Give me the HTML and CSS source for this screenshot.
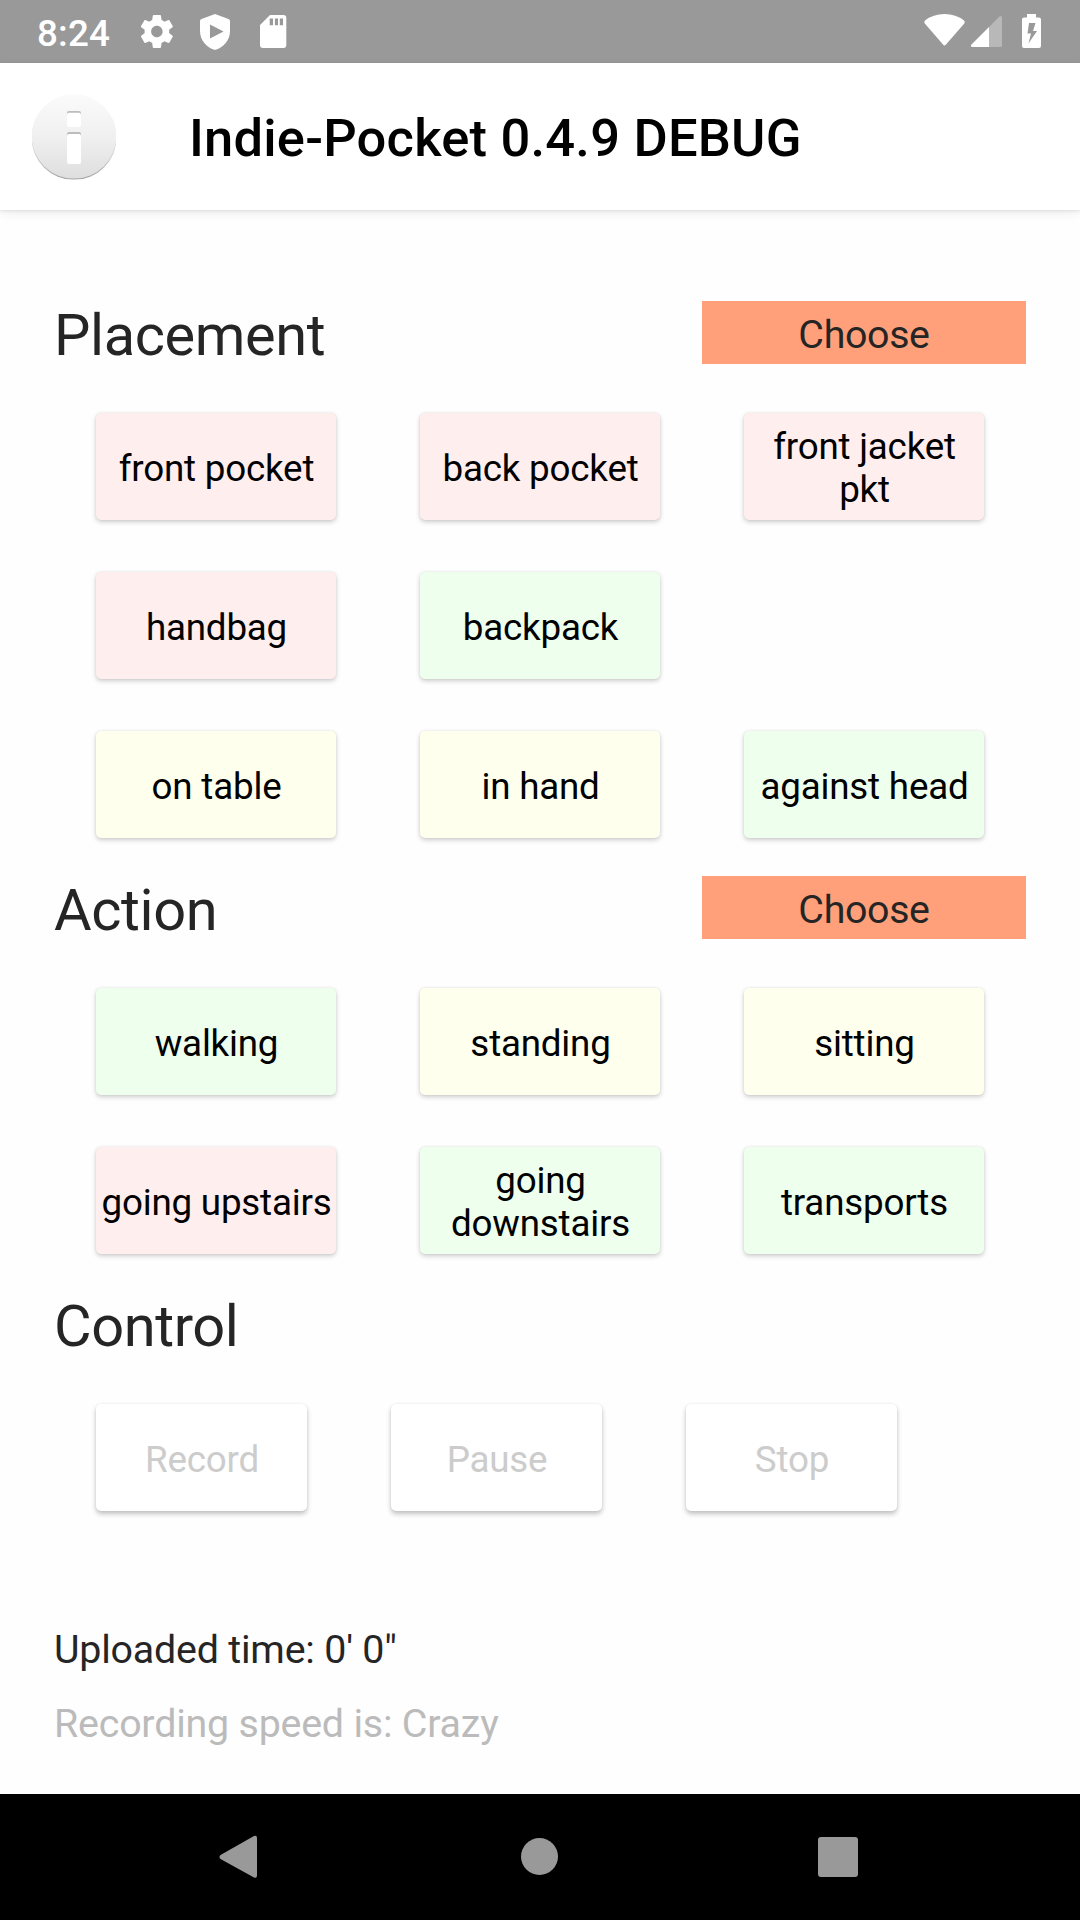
FILE: index.html
```html
<!DOCTYPE html>
<html lang="en">
<head>
<meta charset="utf-8">
<title>Indie-Pocket</title>
<link rel="stylesheet" href="styles.css">
</head>
<body>
<header class="status">
  <span class="clock">8:24</span>
  <svg class="status-left" width="260" height="63" viewBox="120 0 260 63">
    <path fill="#fff" transform="translate(137.2 11.8) scale(1.64)" d="M19.43 12.98c.04-.32.07-.64.07-.98s-.03-.66-.07-.98l2.11-1.65c.19-.15.24-.42.12-.64l-2-3.46c-.12-.22-.39-.3-.61-.22l-2.49 1c-.52-.4-1.08-.73-1.69-.98l-.38-2.65C14.46 2.18 14.25 2 14 2h-4c-.25 0-.46.18-.49.42l-.38 2.65c-.61.25-1.17.59-1.69.98l-2.49-1c-.23-.09-.49 0-.61.22l-2 3.46c-.13.22-.07.49.12.64l2.11 1.65c-.04.32-.07.65-.07.98s.03.66.07.98l-2.11 1.65c-.19.15-.24.42-.12.64l2 3.46c.12.22.39.3.61.22l2.49-1c.52.4 1.08.73 1.69.98l.38 2.65c.03.24.24.42.49.42h4c.25 0 .46-.18.49-.42l.38-2.65c.61-.25 1.17-.59 1.69-.98l2.49 1c.23.09.49 0 .61-.22l2-3.46c.12-.22.07-.49-.12-.64l-2.11-1.65zM12 15.5c-1.93 0-3.5-1.57-3.5-3.5s1.57-3.5 3.5-3.5 3.5 1.57 3.5 3.5-1.57 3.5-3.5 3.5z"/>
    <path fill="#fff" fill-rule="evenodd" d="M215 14L228.500 19Q230 19.500 230 21V31C230 41 223 47 216.500 49.500Q215 50 213.500 49.500C207 47 200 41 200 31V21Q200 19.500 201.500 19ZM210 24.500V38.500L223.500 31.500Z"/>
    <path fill="#fff" fill-rule="evenodd" d="M270 15H283.500Q286.300 15 286.300 17.800V45Q286.300 48 283.500 48H262.800Q260 48 260 45V25ZM269.700 18.500V25.300H273V18.500ZM274.900 18.500V25.300H278V18.500ZM279.800 18.500V25.300H283V18.500Z"/>
  </svg>
  <svg class="status-right" width="160" height="63" viewBox="900 0 160 63">
    <path fill="#fff" d="M925 20.500Q933 14 944.500 14T964 20.500Q965.500 21.800 964.300 23.500L946 44.500Q944.500 46.500 943 44.500L924.800 23.500Q923.500 21.800 925 20.500Z"/>
    <path fill="#b8b8b8" d="M989 27L999.500 16.500Q1002 15 1002 17.500V45.500Q1002 47 1000.500 47H989Z"/>
    <path fill="#fff" d="M989 27V47H972.500Q970 46.500 971.500 44.500Z"/>
    <path fill="#fff" fill-rule="evenodd" d="M1027 14H1036V17.500H1039Q1041 17.500 1041 19.500V46Q1041 48 1039 48H1024Q1022 48 1022 46V19.500Q1022 17.500 1024 17.500H1027ZM1029 23L1027.500 33.500H1031L1028.500 43.500L1037 31H1033L1035.500 23Z"/>
  </svg>
</header>

<div class="appbar">
  <svg class="logo" width="86" height="86" viewBox="0 0 86 86">
    <defs>
      <linearGradient id="disc" x1="0" y1="0" x2="0" y2="1"><stop offset="0" stop-color="#fbfbfb"/><stop offset=".5" stop-color="#f0f0f0"/><stop offset="1" stop-color="#dedede"/></linearGradient>
      <linearGradient id="rim" x1="0" y1="0" x2="0" y2="1"><stop offset=".4" stop-color="#eeeeee"/><stop offset="1" stop-color="#a6a6a6"/></linearGradient>
      <clipPath id="edge"><rect x="1" y="0" width="84" height="85.500"/></clipPath>
    </defs>
    <g clip-path="url(#edge)">
      <circle cx="43" cy="43.500" r="42.500" fill="url(#rim)"/>
      <circle cx="43" cy="42.300" r="42.300" fill="url(#disc)"/>
    </g>
    <rect x="36" y="17" width="14" height="8" rx="2" fill="#bcbcbc"/>
    <rect x="36" y="18.700" width="14" height="14.300" rx="2" fill="#fff"/>
    <rect x="36" y="38" width="14" height="8" rx="2" fill="#bcbcbc"/>
    <rect x="36" y="40" width="14" height="30" rx="2" fill="#fff"/>
  </svg>
  <h1 class="title">Indie-Pocket 0.4.9 DEBUG</h1>
</div>

<main class="content">
  <section class="section">
    <div class="section-head"><h2>Placement</h2><span class="choice">Choose</span></div>
    <div class="grid">
      <button class="btn pink">front pocket</button>
      <button class="btn pink">back pocket</button>
      <button class="btn pink">front jacket pkt</button>
      <button class="btn pink">handbag</button>
      <button class="btn green">backpack</button>
      <button class="btn yellow row-start">on table</button>
      <button class="btn yellow">in hand</button>
      <button class="btn green">against head</button>
    </div>
  </section>
  <section class="section">
    <div class="section-head"><h2>Action</h2><span class="choice">Choose</span></div>
    <div class="grid">
      <button class="btn green">walking</button>
      <button class="btn yellow">standing</button>
      <button class="btn yellow">sitting</button>
      <button class="btn pink">going upstairs</button>
      <button class="btn green">going downstairs</button>
      <button class="btn green">transports</button>
    </div>
  </section>
  <section class="section">
    <div class="section-head"><h2>Control</h2></div>
    <div class="controls">
      <button class="btn" disabled>Record</button>
      <button class="btn" disabled>Pause</button>
      <button class="btn" disabled>Stop</button>
    </div>
  </section>
  <p class="info">Uploaded time: 0' 0"</p>
  <p class="info dim">Recording speed is: Crazy</p>
</main>

<nav class="navbar">
  <svg width="1080" height="126" viewBox="0 0 1080 126">
    <g fill="#999">
      <path d="M220.500 61L254 42Q257 41 257 44V81.500Q257 84.500 254 83.500L220.500 65Q218.500 63 220.500 61Z"/>
      <circle cx="539.500" cy="62.500" r="18.500"/>
      <rect x="818" y="43" width="40" height="40" rx="3"/>
    </g>
  </svg>
</nav>
</body>
</html>
```

FILE: styles.css
```css
* { box-sizing: border-box; }

body {
  margin: 0;
  width: 1080px;
  height: 1920px;
  display: flex;
  flex-direction: column;
  background: #fefefe;
  color: #252525;
  font-family: Roboto, sans-serif;
  overflow: hidden;
}

h1, h2, p { margin: 0; font-weight: 400; }
svg { display: block; flex: none; }

.status {
  height: 63px;
  flex: none;
  display: flex;
  align-items: center;
  padding: 0 20px 0 37px;
  background: #999;
  color: #fff;
}
.clock { width: 83px; font-size: 36.75px; font-weight: 500; line-height: 63px; padding-top: 3px; letter-spacing: .2px; }
.status-right { margin-left: auto; }

.appbar {
  height: 147px;
  flex: none;
  display: flex;
  align-items: center;
  gap: 72px;
  padding-left: 31px;
  background: #fff;
  box-shadow: 0 1px 3px rgba(0, 0, 0, .09), 0 3px 10px rgba(0, 0, 0, .07);
}
.title { padding-top: 3px; color: #000; font-size: 52.5px; font-weight: 500; line-height: 62px; letter-spacing: .2px; }

.content { flex: 1; padding: 91px 54px 0; }

.section-head { display: flex; justify-content: space-between; height: 68px; }
.section-head h2 { font-size: 57.75px; line-height: 68px; letter-spacing: -.4px; }
.choice {
  width: 324px;
  height: 63px;
  background: #ffa07a;
  font-size: 39.375px;
  line-height: 67px;
  letter-spacing: -.35px;
  text-align: center;
}

.grid {
  display: grid;
  grid-template-columns: repeat(3, 324px);
  grid-auto-rows: 107px;
  row-gap: 52px;
  justify-items: center;
  padding: 44px 0 38px;
}
.row-start { grid-column: 1; }
.btn {
  width: 240px;
  height: 107px;
  padding: 3px 0 0 1px;
  border: 0;
  border-radius: 5px;
  background: #fff;
  color: #000;
  font: 36.75px/43px Roboto, sans-serif;
  letter-spacing: -.2px;
  box-shadow: 0 2px 5px rgba(0, 0, 0, .2), 0 0 2px rgba(0, 0, 0, .08);
}
.pink { background: #ffeeee; }
.green { background: #eeffee; }
.yellow { background: #ffffee; }
.btn:disabled { color: #ccc; box-shadow: 0 3px 5px rgba(0, 0, 0, .24), 0 0 2px rgba(0, 0, 0, .08); }

.controls { display: flex; gap: 84px; padding: 44px 42px 0; }
.controls .btn { width: 211px; }

.info { font-size: 39.375px; line-height: 46px; margin-top: 116px; letter-spacing: -.2px; }
.info.dim { margin-top: 28px; color: #bbb; }

.navbar { height: 126px; flex: none; background: #000; }
```
